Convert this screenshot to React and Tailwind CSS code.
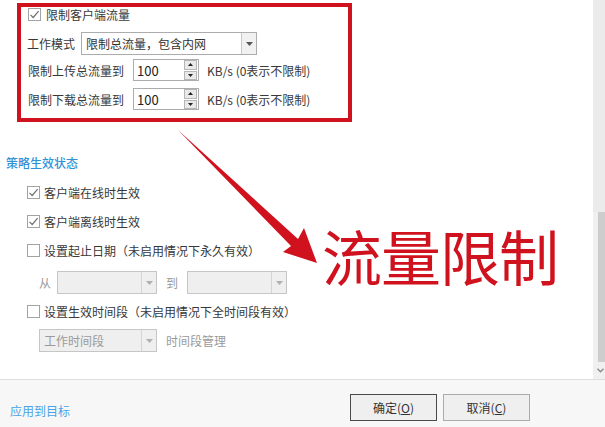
const font = "font-['Noto_Sans_CJK_SC','Noto_Sans',sans-serif]"

function Check({ checked }) {
  return (
    <span className="w-[13px] h-[13px] border border-[#a3a3a3] bg-white flex items-center justify-center shrink-0">
      {checked && (
        <svg width="11" height="11" viewBox="0 0 11 11">
          <path d="M1.5 5.8 L4.2 8.5 L9.6 2.2" fill="none" stroke="#707070" strokeWidth="1.2" />
        </svg>
      )}
    </span>
  )
}

function Caret({ color = '#555' }) {
  return (
    <svg width="7" height="4" viewBox="0 0 7 4">
      <path d="M0 0 L7 0 L3.5 4 Z" fill={color} />
    </svg>
  )
}

function Select({ width, text, disabled }) {
  return (
    <div
      className={`h-[23px] flex border ${disabled ? 'border-[#c6c6c6] bg-[#efefef]' : 'border-[#acacac] bg-white'}`}
      style={{ width }}
    >
      <div className={`flex-1 flex items-center pl-[4px] ${disabled ? 'text-[#9a9a9a]' : 'text-[#333]'}`}>{text}</div>
      <div className={`w-[15px] flex items-center justify-center border-l ${disabled ? 'border-[#d4d4d4]' : 'border-[#c8c8c8] bg-[#f1f1f1]'}`}>
        <Caret color={disabled ? '#b0b0b0' : '#555'} />
      </div>
    </div>
  )
}

function NumberInput() {
  return (
    <div className="w-[66px] h-[22px] border border-[#acacac] bg-white flex items-center">
      <span className="flex-1 pl-[3px] text-[13px] text-[#222]">100</span>
      <div className="w-[13px] h-[20px] mr-[1px] flex flex-col gap-[1px]">
        <div className="flex-1 border border-[#b5b5b5] bg-[#e9e9e9] flex items-center justify-center">
          <svg width="5" height="3" viewBox="0 0 5 3"><path d="M0 3 L5 3 L2.5 0 Z" fill="#222" /></svg>
        </div>
        <div className="flex-1 border border-[#b5b5b5] bg-[#e9e9e9] flex items-center justify-center">
          <svg width="5" height="3" viewBox="0 0 5 3"><path d="M0 0 L5 0 L2.5 3 Z" fill="#222" /></svg>
        </div>
      </div>
    </div>
  )
}

export default function App() {
  return (
    <div className={`w-[605px] h-[427px] flex flex-col bg-white text-[12px] leading-[17px] text-[#383838] ${font}`}>
      <div className="h-[379px] flex relative">
        <div className="flex-1 flex flex-col">
          {/* highlighted block */}
          <div className="ml-[17px] mt-[3px] w-[335px] h-[119px] border-4 border-[#d0121f] flex flex-col">
            <div className="h-[14px] flex items-center gap-[5px] pl-[7px]">
              <Check checked />
              <span>限制客户端流量</span>
            </div>
            <div className="mt-[11px] flex items-center pl-[6px]">
              <span className="w-[54px]">工作模式</span>
              <Select width={176} text="限制总流量，包含内网" />
            </div>
            <div className="mt-[4px] flex items-center pl-[7px]">
              <span className="w-[105px]">限制上传总流量到</span>
              <NumberInput />
              <span className="ml-[8px]">KB/s (0表示不限制)</span>
            </div>
            <div className="mt-[7px] flex items-center pl-[7px]">
              <span className="w-[105px]">限制下载总流量到</span>
              <NumberInput />
              <span className="ml-[8px]">KB/s (0表示不限制)</span>
            </div>
          </div>

          <div className="mt-[32px] ml-[6px] h-[17px] text-[#2f93d8] font-medium">策略生效状态</div>

          <div className="mt-[7px] ml-[27px] flex flex-col">
            <div className="h-[29px] flex items-center gap-[4px]">
              <Check checked />
              <span>客户端在线时生效</span>
            </div>
            <div className="h-[29px] flex items-center gap-[4px]">
              <Check checked />
              <span>客户端离线时生效</span>
            </div>
            <div className="h-[29px] flex items-center gap-[4px]">
              <Check />
              <span>设置起止日期（未启用情况下永久有效）</span>
            </div>
          </div>

          <div className="mt-[6px] ml-[39px] flex items-center text-[#9a9a9a]">
            <span className="w-[18px]">从</span>
            <Select width={100} text="" disabled />
            <span className="ml-[9px] w-[21px]">到</span>
            <Select width={100} text="" disabled />
          </div>

          <div className="mt-[3px] ml-[27px] h-[29px] flex items-center gap-[4px]">
            <Check />
            <span>设置生效时间段（未启用情况下全时间段有效）</span>
          </div>

          <div className="mt-[3px] ml-[39px] flex items-center">
            <Select width={118} text="工作时间段" disabled />
            <span className="ml-[9px] text-[#9a9a9a]">时间段管理</span>
          </div>
        </div>

        {/* scrollbar */}
        <div className="w-[12px] flex flex-col bg-[#ebebeb]">
          <div className="h-[212px]" />
          <div className="h-[150px] flex">
            <div className="w-[5px] bg-[#f0f0f0]" />
            <div className="flex-1 bg-[#cdcdcd]" />
          </div>
          <div className="flex-1 bg-[#f0f0f0] flex items-center justify-end pr-[1px]">
            <svg width="7" height="5" viewBox="0 0 7 5">
              <path d="M0.5 0.8 L3.5 3.8 L6.5 0.8" fill="none" stroke="#8a8a8a" strokeWidth="1.4" />
            </svg>
          </div>
        </div>

        {/* annotation overlay */}
        <svg className="absolute left-0 top-0 pointer-events-none" width="605" height="379">
          <path d="M178 130 L298 239 L304 228 L317 263 L283 252 L291 246 Z" fill="#d0121f" />
        </svg>
        <div className="absolute left-[322px] top-[225px] text-[60px] leading-[60px] text-[#d0121f] tracking-[-1px]">流量限制</div>
      </div>

      {/* footer */}
      <div className="flex-1 border-t border-[#dedede] bg-[#f7f7f7] flex items-center">
        <span className="ml-[10px] mt-[14px] text-[#4aa3e6]">应用到目标</span>
        <div className="ml-auto mr-[75px] mt-[8px] flex gap-[6px]">
          <button className="w-[87px] h-[27px] border border-[#4a4a4a] bg-[#efefef] text-[12px] text-[#333]">
            确定(<span className="underline">O</span>)
          </button>
          <button className="w-[87px] h-[27px] border border-[#ababab] bg-[#efefef] text-[12px] text-[#333]">
            取消(<span className="underline">C</span>)
          </button>
        </div>
      </div>
    </div>
  )
}
